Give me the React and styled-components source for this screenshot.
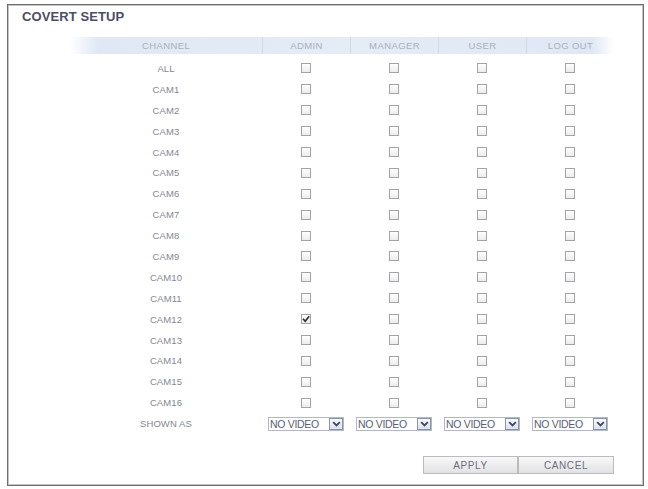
import React from 'react';
import styled, { createGlobalStyle } from 'styled-components';

const GlobalStyle = createGlobalStyle`
  body {
    margin: 0;
    background: #fff;
    font-family: "Liberation Sans", Arial, sans-serif;
  }
`;

const Panel = styled.div`
  margin: 4px 0 0 7px;
  width: 637px;
  height: 482px;
  box-sizing: border-box;
  border: 1px solid #6e6e6e;
  box-shadow: inset 0 0 0 1px #c4c4c4;
  display: flex;
  flex-direction: column;
`;

const Title = styled.h1`
  margin: 0;
  padding: 5px 0 0 14px;
  font-size: 13px;
  line-height: 14px;
  font-weight: bold;
  color: #4d4d66;
  letter-spacing: 0.1px;
`;

const Table = styled.div`
  margin: 13px 0 0 62px;
  width: 544px;
  display: flex;
  flex-direction: column;
`;

const Row = styled.div`
  display: grid;
  grid-template-columns: 192px repeat(4, 88px);
  height: 20.9px;
  align-items: center;
  justify-items: center;
`;

const HeaderRow = styled(Row)`
  height: 17px;
  margin-bottom: 4px;
  align-items: stretch;
  background: linear-gradient(
    90deg,
    rgba(222, 232, 244, 0) 0,
    #dfe8f4 28px,
    #e4ecf6 50%,
    #dfe8f4 calc(100% - 22px),
    rgba(222, 232, 244, 0) 100%
  );
`;

const HeaderCell = styled.div`
  width: 100%;
  display: flex;
  align-items: center;
  justify-content: center;
  font-size: 9.5px;
  letter-spacing: 0.4px;
  color: #a9b0bf;
  border-left: ${({ $first }) => ($first ? 'none' : '1px solid #d2dae6')};
  box-sizing: border-box;
`;

const Label = styled.span`
  font-size: 9.5px;
  color: #858791;
  letter-spacing: 0.1px;
`;

const Box = styled.span`
  width: 10px;
  height: 10px;
  box-sizing: border-box;
  border: 1px solid #a3a3a8;
  background: linear-gradient(#ffffff, #ececef);
  display: flex;
  align-items: center;
  justify-content: center;
`;

const Select = styled.div`
  width: 76px;
  height: 14px;
  box-sizing: border-box;
  border: 1px solid #b4b8c6;
  display: flex;
  align-items: center;
  justify-content: space-between;
  padding-left: 1px;
  background: #fff;
`;

const SelectText = styled.span`
  font-size: 10.5px;
  color: #5a5e76;
  letter-spacing: -0.3px;
`;

const Arrow = styled.span`
  width: 14px;
  height: 12px;
  box-sizing: border-box;
  border: 1px solid #8c93a8;
  background: linear-gradient(#f7f8fb, #dde1ea);
  display: flex;
  align-items: center;
  justify-content: center;
`;

const ButtonBar = styled.div`
  display: flex;
  justify-content: flex-end;
  margin-top: 22px;
`;

const Button = styled.button`
  width: ${({ $w }) => $w}px;
  height: 18px;
  margin: 0;
  padding: 0;
  border: 1px solid #bcbcc0;
  background: linear-gradient(#f8f8f8, #e2e2e4);
  font-family: inherit;
  font-size: 10px;
  letter-spacing: 0.6px;
  color: #6c6e7c;
`;

const Check = ({ checked }) => (
  <Box>
    {checked && (
      <svg width="8" height="8" viewBox="0 0 8 8">
        <path d="M1 3.8 L3.2 6.2 L7.2 1.2" fill="none" stroke="#2e2e38" strokeWidth="1.7" />
      </svg>
    )}
  </Box>
);

const Dropdown = () => (
  <Select>
    <SelectText>NO VIDEO</SelectText>
    <Arrow>
      <svg width="9" height="6" viewBox="0 0 9 6">
        <path d="M1.2 1.2 L4.5 4.4 L7.8 1.2" fill="none" stroke="#3d4766" strokeWidth="1.8" />
      </svg>
    </Arrow>
  </Select>
);

const columns = ['CHANNEL', 'ADMIN', 'MANAGER', 'USER', 'LOG OUT'];
const channels = ['ALL', ...Array.from({ length: 16 }, (_, i) => `CAM${i + 1}`)];
const checked = { CAM12: [true, false, false, false] };

export default function App() {
  return (
    <>
      <GlobalStyle />
      <Panel>
        <Title>COVERT SETUP</Title>
        <Table>
          <HeaderRow>
            {columns.map((c, i) => (
              <HeaderCell key={c} $first={i === 0}>{c}</HeaderCell>
            ))}
          </HeaderRow>
          {channels.map((ch) => (
            <Row key={ch}>
              <Label>{ch}</Label>
              {[0, 1, 2, 3].map((i) => (
                <Check key={i} checked={checked[ch] && checked[ch][i]} />
              ))}
            </Row>
          ))}
          <Row>
            <Label>SHOWN AS</Label>
            {[0, 1, 2, 3].map((i) => (
              <Dropdown key={i} />
            ))}
          </Row>
          <ButtonBar>
            <Button $w={95}>APPLY</Button>
            <Button $w={96}>CANCEL</Button>
          </ButtonBar>
        </Table>
      </Panel>
    </>
  );
}
